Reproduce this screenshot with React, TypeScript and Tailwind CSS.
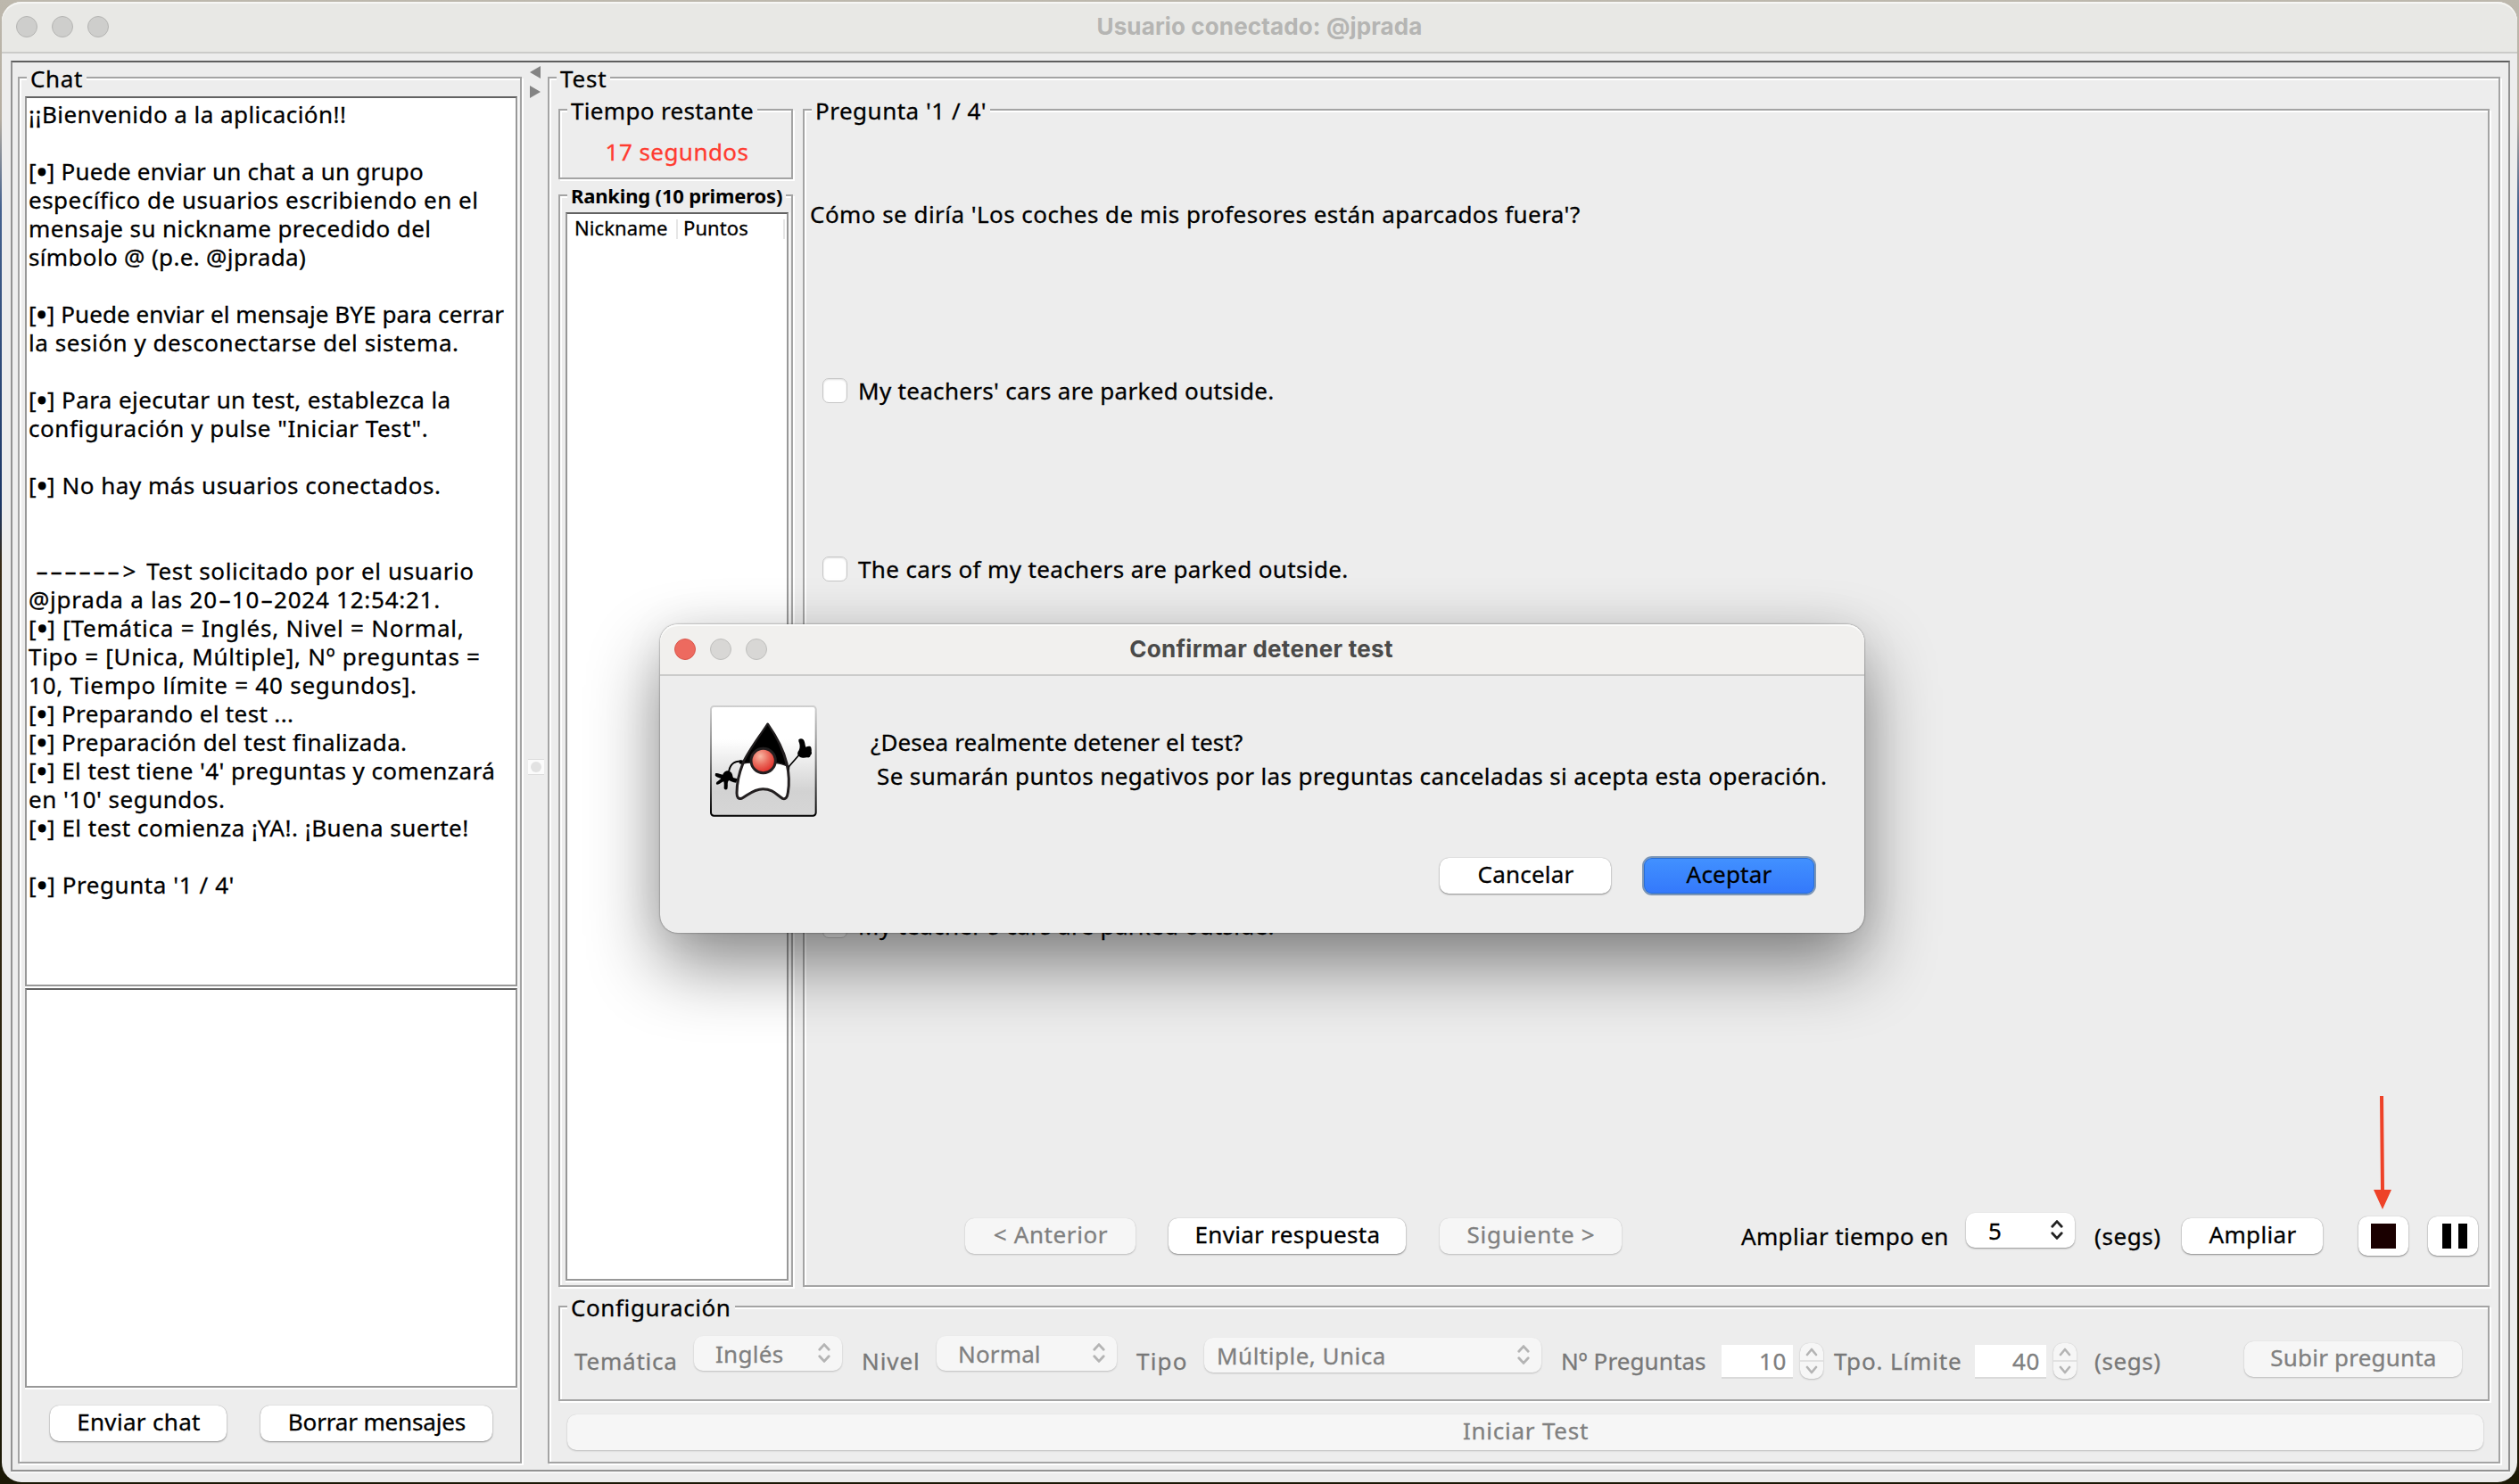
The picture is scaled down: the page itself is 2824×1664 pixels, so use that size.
import React from 'react';
import clsx from 'clsx';

type BoxProps = { className?: string; children?: React.ReactNode };

function Group({ title, className, titleClass, children }: BoxProps & { title: string; titleClass?: string }) {
  return (
    <section
      className={clsx(
        'relative flex shrink-0 flex-col border-2 border-[#a4a4a4] shadow-[2px_2px_0_#fff,inset_2px_2px_0_#fff]',
        className,
      )}
    >
      <h2
        className={clsx(
          'absolute left-2 bg-[#ededed] pr-1 whitespace-nowrap',
          titleClass ?? '-top-[15px] pl-1 text-[26px] leading-[30px]',
        )}
      >
        {title}
      </h2>
      {children}
    </section>
  );
}

function Well({ className, children }: BoxProps) {
  return (
    <div
      className={clsx(
        'shrink-0 border-2 border-[#989898] border-t-[#626262] bg-white shadow-[0_2px_0_#fff,2px_0_0_#f7f7f7]',
        className,
      )}
    >
      {children}
    </div>
  );
}

function Button({ className, disabled, children }: BoxProps & { disabled?: boolean }) {
  return (
    <button
      className={clsx(
        'flex shrink-0 justify-center rounded-[10px] pb-1 pl-px leading-[36px] whitespace-nowrap',
        disabled
          ? 'bg-[#f6f6f6] text-[#808080] shadow-[0_1px_2px_rgba(0,0,0,0.2),0_0_1px_rgba(0,0,0,0.15)]'
          : 'bg-white shadow-[0_1px_2px_rgba(0,0,0,0.4),0_0_1px_rgba(0,0,0,0.3)]',
        className,
      )}
    >
      {children}
    </button>
  );
}

function Combo({ className, disabled, children }: BoxProps & { disabled?: boolean }) {
  return (
    <div
      className={clsx(
        'flex h-[39px] shrink-0 items-start justify-between rounded-[10px] pr-[13px] leading-[40px]',
        disabled
          ? 'bg-[#f6f6f6] text-[#808080] shadow-[0_1px_2px_rgba(0,0,0,0.2)]'
          : 'bg-white shadow-[0_1px_2px_rgba(0,0,0,0.4)]',
        className,
      )}
    >
      <span>{children}</span>
      <svg
        className={clsx('mt-2', disabled ? 'text-[#b4b4b4]' : 'text-[#222]')}
        width="14"
        height="22"
        viewBox="0 0 14 22"
        fill="none"
        stroke="currentColor"
        strokeWidth="2.8"
        strokeLinecap="round"
        strokeLinejoin="round"
      >
        <path d="M1.8 7.2 7 1.6l5.2 5.6M1.8 14.8 7 20.4l5.2-5.6" />
      </svg>
    </div>
  );
}

function Spinner({ value }: { value: string }) {
  return (
    <>
      <div className="mt-[10px] h-9 w-20 shrink-0 bg-white pr-[7px] text-right leading-[36px] text-[#808080] shadow-[0_2px_0_#dadada]">
        {value}
      </div>
      <div className="mt-2 ml-2 flex h-10 w-[26px] shrink-0 flex-col items-center justify-center rounded-[10px] bg-[#f6f6f6] shadow-[0_1px_2px_rgba(0,0,0,0.2),0_0_1px_rgba(0,0,0,0.15)]">
        <svg width="26" height="40" viewBox="0 0 26 40" fill="none" stroke="#b4b4b4" strokeWidth="2.6" strokeLinecap="round" strokeLinejoin="round">
          <path d="M0 20h26" stroke="#e2e2e2" strokeWidth="2" />
          <path d="M8 13l5-6 5 6M8 27l5 6 5-6" />
        </svg>
      </div>
    </>
  );
}

function Dash() {
  return (
    <span className="inline-block w-[16px] text-center tracking-normal">
      <span className="inline-block scale-x-[1.7]">-</span>
    </span>
  );
}

function Mark() {
  return (
    <>
      [<span className="inline-block w-3 text-center tracking-normal [-webkit-text-stroke:3px]">•</span>]{' '}
    </>
  );
}

function Option({ children, className }: BoxProps) {
  return (
    <label className={clsx('flex h-10 shrink-0 items-center gap-3 pl-5 leading-[40px]', className)}>
      <span className="size-7 rounded-[7px] border border-[#c6c6c6] bg-white shadow-[inset_0_1px_2px_rgba(0,0,0,0.12)]" />
      {children}
    </label>
  );
}

function Light({ className }: BoxProps) {
  return <span className={clsx('size-6 rounded-full border', className)} />;
}

function Duke() {
  return (
    <svg className="shrink-0" width="120" height="125" viewBox="48 33 360 375">
      <defs>
        <linearGradient id="face" x1="0" y1="0" x2="0" y2="1">
          <stop offset="0.3" stopColor="#fff" />
          <stop offset="0.78" stopColor="#d2d2d2" />
          <stop offset="1" stopColor="#d6d6d6" />
        </linearGradient>
        <linearGradient id="edge" x1="0" y1="0" x2="0" y2="1">
          <stop offset="0" stopColor="#cfcfcf" />
          <stop offset="0.5" stopColor="#777" />
          <stop offset="1" stopColor="#000" />
        </linearGradient>
        <radialGradient id="nose" cx="0.38" cy="0.32" r="0.7">
          <stop offset="0" stopColor="#f7b8a4" />
          <stop offset="0.5" stopColor="#ea6a5c" />
          <stop offset="1" stopColor="#df2a26" />
        </radialGradient>
      </defs>
      <rect x="51" y="36" width="353" height="368" rx="10" fill="url(#face)" stroke="url(#edge)" strokeWidth="6" />
      <path d="M158 221c-24-2-42 4-47 36" fill="none" stroke="#000" strokeWidth="6" />
      <path d="M148 217l16 2-4 14-14-5zM302 232l14 6-1 14-13 1z" fill="#000" />
      <path
        d="M66 262c8-3 15 3 25 4 1-9 16-19 24-10 9 4 8 14 11 20l14 4-4 13c-12-1-19-6-24-8-8 6-2 17-6 29-4 4-10 2-11-3 0-8 1-15-1-22-8 2-15 11-23 10-5-4-1-9 4-12l10-8c-8-3-18-5-20-11z"
        fill="#000"
      />
      <path d="M312 240l42-48" fill="none" stroke="#000" strokeWidth="5" />
      <path
        d="M346 148c6-6 15-4 18 3 4 8 3 15 6 22 8-3 16-4 18 2 1 5 2 9 1 13 2 5 1 9-3 12-1 7-5 9-11 8-9 1-18 2-25-2-10-6-9-14-3-22 5-10 3-22-1-30z"
        fill="#000"
      />
      <path
        d="M242 96c-34 52-70 98-84 134-12 30-20 66-20 98 0 16 6 20 16 18 18-8 38-32 72-32s48 22 66 32c10 4 16-4 18-20 6-34 4-62-4-98-10-44-36-92-64-132z"
        fill="#fff"
        stroke="#231f20"
        strokeWidth="9"
        strokeLinejoin="round"
      />
      <path d="M242 96c-34 52-66 92-82 132 20-4 28-2 36-2h64c16 0 30 4 45 10-10-46-35-100-63-140z" fill="#000" stroke="#231f20" strokeWidth="4" />
      <circle cx="227" cy="219" r="41" fill="url(#nose)" stroke="#231f20" strokeWidth="9" />
    </svg>
  );
}

function Log() {
  return (
    <div className="pt-0.5 pl-0.5 leading-[32px] whitespace-pre">
      <p className="tracking-[0.45px]">¡¡Bienvenido a la aplicación!!</p>
      <p className="mt-8 tracking-[0.22px]"><Mark />Puede enviar un chat a un grupo</p>
      <p className="tracking-[0.5px]">específico de usuarios escribiendo en el</p>
      <p className="tracking-[0.42px]">mensaje su nickname precedido del</p>
      <p className="tracking-[0.34px]">símbolo @ (p.e. @jprada)</p>
      <p className="mt-8 tracking-[0.09px]"><Mark />Puede enviar el mensaje BYE para cerrar</p>
      <p className="tracking-[0.55px]">la sesión y desconectarse del sistema.</p>
      <p className="mt-8 tracking-[0.4px]"><Mark />Para ejecutar un test, establezca la</p>
      <p className="tracking-[0.55px]">configuración y pulse "Iniciar Test".</p>
      <p className="mt-8 tracking-[0.51px]"><Mark />No hay más usuarios conectados.</p>
      <p className="mt-16 tracking-[0.62px]">
        {' '}
        <Dash />
        <Dash />
        <Dash />
        <Dash />
        <Dash />
        <Dash />
        <span className="mr-1 ml-0.5">{'>'}</span>
        {' Test solicitado por el usuario'}
      </p>
      <p className="tracking-[0.75px]">
        @jprada a las 20
        <Dash />
        10
        <Dash />
        2024 12:54:21.
      </p>
      <p className="tracking-[0.78px]"><Mark />[Temática = Inglés, Nivel = Normal,</p>
      <p className="tracking-[0.72px]">Tipo = [Unica, Múltiple], Nº preguntas =</p>
      <p className="tracking-[0.77px]">10, Tiempo límite = 40 segundos].</p>
      <p className="tracking-[0.37px]"><Mark />Preparando el test ...</p>
      <p className="tracking-[0.4px]"><Mark />Preparación del test finalizada.</p>
      <p className="tracking-[0.43px]"><Mark />El test tiene '4' preguntas y comenzará</p>
      <p className="tracking-[0.49px]">en '10' segundos.</p>
      <p className="tracking-[0.5px]"><Mark />El test comienza ¡YA!. ¡Buena suerte!</p>
      <p className="mt-8 tracking-[0.58px]"><Mark />Pregunta '1 / 4'</p>
    </div>
  );
}

function ChatPanel() {
  return (
    <Group title="Chat" className="h-[1555px] w-[565px] tracking-[0.6px]">
      <Well className="mt-5 ml-1.5 h-[998px] w-[552px]">
        <Log />
      </Well>
      <Well className="mt-0.5 ml-1.5 h-[448px] w-[552px]" />
      <div className="mt-5 ml-[34px] flex gap-[38px]">
        <Button className="h-10 w-[198px] tracking-[0.33px]">Enviar chat</Button>
        <Button className="h-10 w-[260px] tracking-[-0.15px]">Borrar mensajes</Button>
      </div>
    </Group>
  );
}

function Splitter() {
  return (
    <div className="flex w-[29px] shrink-0 flex-col items-start pl-[9px]">
      <svg className="-mt-3" width="12" height="36" viewBox="0 0 12 36" fill="#848484">
        <path d="M12 0v14L0 7zM0 22v14l12-7z" />
      </svg>
      <div className="mt-[741px] -ml-0.5 flex size-[18px] items-center justify-center border-y border-[#dcdcdc] bg-[#fbfbfb]">
        <span className="size-3 rounded-full bg-[#e2e2e2]" />
      </div>
    </div>
  );
}

function QuestionPanel() {
  return (
    <Group title="Pregunta '1 / 4'" className="h-[1321px] w-[1891px]">
      <p className="mt-24 pl-[6px] leading-[40px] tracking-[0.45px]">
        Cómo se diría 'Los coches de mis profesores están aparcados fuera'?
      </p>
      <Option className="mt-[158px] tracking-[0.31px]">My teachers' cars are parked outside.</Option>
      <Option className="mt-40 tracking-[0.38px]">The cars of my teachers are parked outside.</Option>
      <Option className="mt-[360px] tracking-[0.31px]">My teacher's cars are parked outside.</Option>
      <div className="mt-[302px] ml-[180px] flex items-start leading-[40px] whitespace-nowrap">
        <Button disabled className="mt-1.5 h-10 w-[191px] tracking-[0.6px]">{'< Anterior'}</Button>
        <Button className="mt-1.5 ml-[37px] h-10 w-[266px] tracking-[0.3px]">Enviar respuesta</Button>
        <Button disabled className="mt-1.5 ml-[38px] h-10 w-[204px] tracking-[0.7px]">{'Siguiente >'}</Button>
        <span className="mt-1.5 ml-[134px] w-[252px] shrink-0 tracking-[0.35px]">Ampliar tiempo en</span>
        <Combo className="w-[122px] pl-[25px]">5</Combo>
        <span className="mt-1.5 ml-[22px] w-[98px] shrink-0 tracking-[0.6px]">(segs)</span>
        <Button className="mt-1.5 h-10 w-[158px] tracking-[0.35px]">Ampliar</Button>
        <div className="relative ml-10">
          <Button className="mt-1 h-11 w-14 items-center !p-0">
            <span className="size-7 bg-[#1a0000]" />
          </Button>
          <svg className="absolute -top-[131px] left-4" width="22" height="127" viewBox="0 0 22 127" fill="#ee4228">
            <path d="M8 0h4l1 105h8L11 127 1 105h8z" />
          </svg>
        </div>
        <Button className="mt-1 ml-[22px] h-11 w-14 items-center gap-2 !p-0 !pl-1">
          <span className="h-7 w-2.5 bg-black" />
          <span className="h-7 w-2.5 bg-black" />
        </Button>
      </div>
    </Group>
  );
}

function ConfigPanel() {
  return (
    <Group title="Configuración" className="mt-[21px] ml-[10px] h-[107px] w-[2165px] tracking-[0.6px]">
      <div className="mt-8 ml-4 flex items-start leading-[40px] whitespace-nowrap text-[#787878]">
        <span className="mt-2 w-[134px] shrink-0 tracking-[0.8px]">Temática</span>
        <Combo disabled className="w-[166px] pl-6 tracking-[0.3px]">Inglés</Combo>
        <span className="mt-2 ml-[22px] w-[84px] shrink-0 tracking-[0.9px]">Nivel</span>
        <Combo disabled className="w-[202px] pl-6 tracking-[0.15px]">Normal</Combo>
        <span className="mt-2 ml-[22px] w-[76px] shrink-0 tracking-[1.2px]">Tipo</span>
        <Combo disabled className="mt-0.5 w-[378px] pl-3.5 tracking-[0.5px]">Múltiple, Unica</Combo>
        <span className="mt-2 ml-[22px] w-[180px] shrink-0 tracking-[0.1px]">Nº Preguntas</span>
        <Spinner value="10" />
        <span className="mt-2 ml-3 w-[158px] shrink-0 tracking-[0.87px]">Tpo. Límite</span>
        <Spinner value="40" />
        <span className="mt-2 ml-[20px] w-[168px] shrink-0 tracking-[0.6px]">(segs)</span>
        <Button disabled className="mt-1.5 h-10 w-[244px] tracking-[0.2px]">Subir pregunta</Button>
      </div>
    </Group>
  );
}

function TestPanel() {
  return (
    <Group title="Test" className="h-[1555px] w-[2189px] tracking-[0.8px]">
      <div className="mt-[34px] ml-[10px] flex shrink-0 gap-[11px] tracking-[0.5px]">
        <div className="flex flex-col">
          <Group title="Tiempo restante" className="h-[79px] w-[263px] tracking-[0.33px]">
            <p className="mt-[26px] pl-[3px] text-center leading-[40px] tracking-[0.45px] text-[#ff3b30]">17 segundos</p>
          </Group>
          <Group
            title="Ranking (10 primeros)"
            titleClass="-top-[13px] pl-1 text-[22px] leading-[24px] font-bold tracking-[-0.18px] [-webkit-text-stroke:0]"
            className="mt-[17px] h-[1225px] w-[263px]"
          >
            <Well className="mt-[18px] ml-1.5 h-[1198px] w-[250px]">
              <div className="flex h-7 items-end text-[22px] leading-[26px]">
                <div className="flex w-[124px] items-end justify-between pl-2 tracking-[0.1px]">
                  Nickname
                  <span className="h-[22px] w-0.5 bg-[#e6e6e6]" />
                </div>
                <div className="flex w-[120px] items-end justify-between pl-1.5 tracking-[0.1px]">
                  Puntos
                  <span className="h-[22px] w-0.5 bg-[#e6e6e6]" />
                </div>
              </div>
            </Well>
          </Group>
        </div>
        <QuestionPanel />
      </div>
      <ConfigPanel />
      <Button disabled className="mt-[15px] ml-5 h-10 w-[2148px] tracking-[0.76px]">Iniciar Test</Button>
    </Group>
  );
}

function ConfirmDialog() {
  return (
    <div className="absolute top-[700px] left-[740px] flex h-[346px] w-[1350px] flex-col rounded-[20px] bg-[#ededed] shadow-[0_0_2px_rgba(0,0,0,0.6),0_36px_80px_rgba(0,0,0,0.46),0_0_50px_rgba(0,0,0,0.06)]">
      <header className="relative flex h-[58px] shrink-0 items-center justify-center rounded-t-[20px] border-b-2 border-[#cbcbca] bg-[#f1f0ee] pr-0.5 pb-px font-['Inter'] text-[26px] font-bold tracking-[0.28px] text-[#4a4a49] shadow-[inset_0_2px_0_#fbfbfa] [-webkit-text-stroke:0]">
        <div className="absolute top-4 left-4 flex gap-4">
          <Light className="border-[#d9574c] bg-[#ed6a5f]" />
          <Light className="border-[#bfbfbd] bg-[#d8d7d5]" />
          <Light className="border-[#bfbfbd] bg-[#d8d7d5]" />
        </div>
        Confirmar detener test
      </header>
      <div className="mt-[33px] ml-[56px] flex items-start gap-[61px]">
        <Duke />
        <div className="mt-[22px] leading-[38px] whitespace-nowrap">
          <p className="-ml-px tracking-[0.11px]">¿Desea realmente detener el test?</p>
          <p className="pl-1.5 tracking-[0.39px]">
            Se sumarán puntos negativos por las preguntas canceladas si acepta esta operación.
          </p>
        </div>
      </div>
      <div className="mt-[46px] mr-[56px] flex justify-end gap-[37px]">
        <Button className="h-10 w-[192px] tracking-[0.2px]">Cancelar</Button>
        <button className="flex h-10 w-[191px] justify-center rounded-[9px] bg-linear-to-b from-[#4291ff] to-[#3478fb] leading-[36px] tracking-[0.2px] shadow-[inset_0_0_0_1px_#2a6fd6,0_0_0_2px_#7b95b5]">
          Aceptar
        </button>
      </div>
    </div>
  );
}

export default function App() {
  return (
    <div className="relative h-[1664px] w-[2824px] overflow-hidden bg-[linear-gradient(180deg,#bdb8ad_0%,#b5ada0_8%,#45628f_14%,#1c3766_34%,#3a2c16_38%,#2a220c_80%,#1c1906_100%)] p-0.5 font-['Noto_Sans',sans-serif] text-[26px] text-black [-webkit-text-stroke:0.3px]">
      <div className="flex h-[1660px] w-[2820px] flex-col rounded-[22px] bg-[#ededed]">
        <header className="relative flex h-[58px] shrink-0 items-center justify-center rounded-t-[22px] border-b-2 border-[#cbcbc9] bg-[#e8e8e5] pb-px font-['Inter'] text-[26px] font-bold tracking-[0.13px] text-[#b5b5b3] shadow-[inset_0_2px_0_#f6f6f4] [-webkit-text-stroke:0]">
          <div className="absolute top-4 left-4 flex gap-4">
            <Light className="border-[#b5b5b3] bg-[#cececc]" />
            <Light className="border-[#b5b5b3] bg-[#cececc]" />
            <Light className="border-[#b5b5b3] bg-[#cececc]" />
          </div>
          Usuario conectado: @jprada
        </header>
        <main className="mt-2 ml-[10px] flex h-[1582px] w-[2802px] border-2 border-[#929292] border-t-[#5f5f5f] pt-4 pl-1.5 shadow-[0_2px_0_#f8f8f8]">
          <ChatPanel />
          <Splitter />
          <TestPanel />
        </main>
      </div>
      <ConfirmDialog />
    </div>
  );
}
